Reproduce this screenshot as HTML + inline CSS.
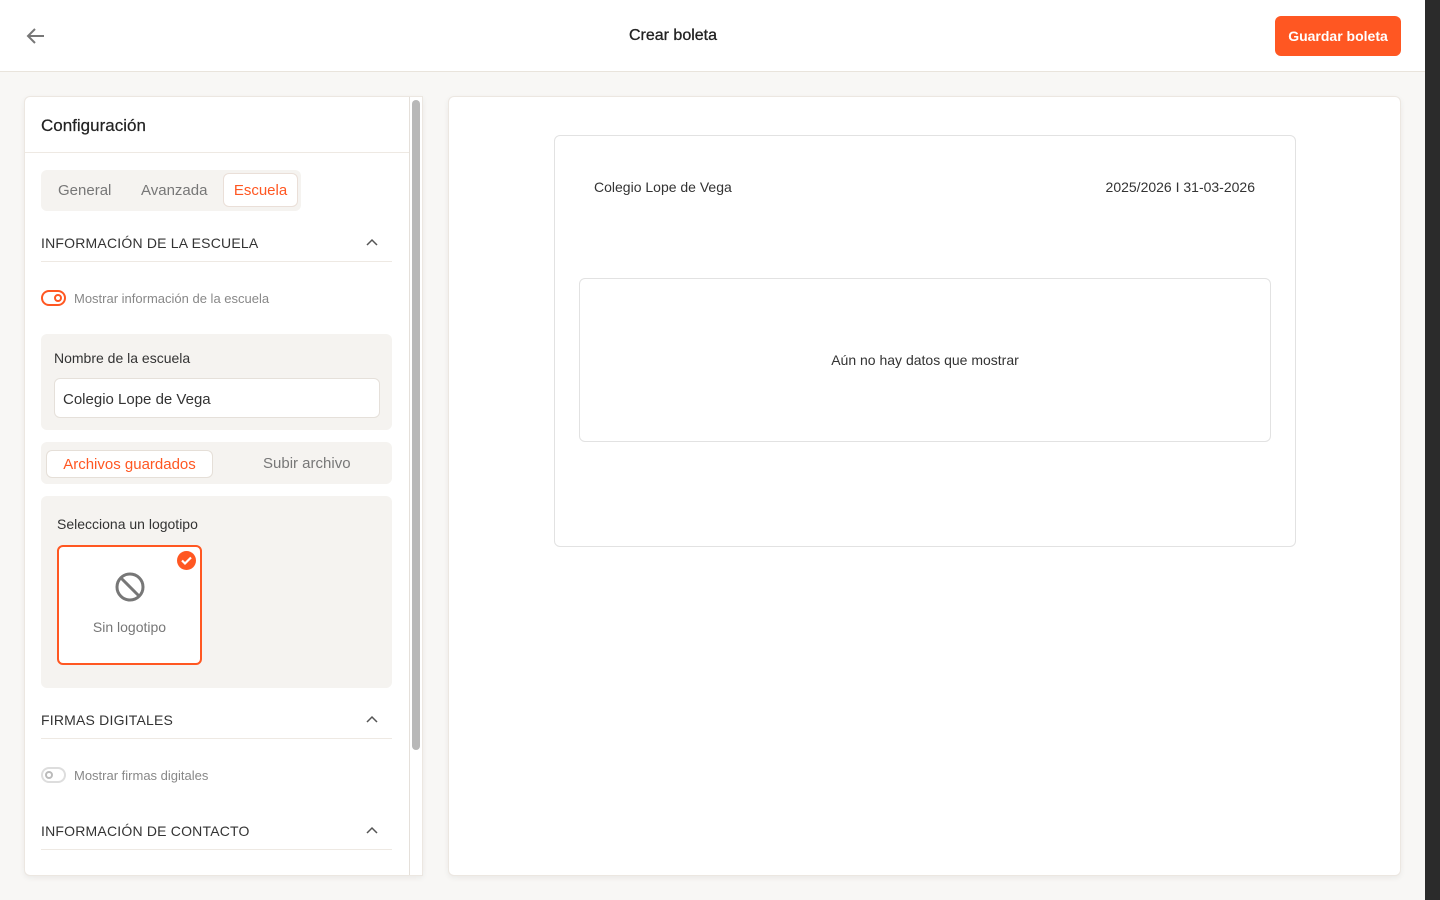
<!DOCTYPE html>
<html><head><meta charset="utf-8"><style>
*{box-sizing:border-box;margin:0;padding:0}
body{width:1440px;height:900px;overflow:hidden;background:#f8f7f5;font-family:"Liberation Sans",sans-serif;position:relative;color:#333}
.abs{position:absolute}
.top{left:0;top:0;width:1425px;height:72px;background:#fff;border-bottom:1px solid #e9e4dc}
.dark{left:1425px;top:0;width:15px;height:900px;background:#2b2b2b}
.btn{left:1275px;top:16px;width:126px;height:40px;background:#ff5722;border-radius:6px;color:#fff;font-weight:bold;font-size:14px;text-align:center;line-height:41px}
.card{background:#fff;border:1px solid #ece7e1;border-radius:6px;box-shadow:0 2px 6px rgba(0,0,0,.06)}
.sec{font-size:14px;color:#333;letter-spacing:.2px}
.hr{height:1px;background:#eee9e3}
.chev{width:12px;height:8px}
</style></head><body>
<div class="abs top"></div>
<svg class="abs" style="left:26px;top:27px" width="20" height="18" viewBox="0 0 20 18"><path d="M18 9H3M9 2L2 9l7 7" fill="none" stroke="#777" stroke-width="2"/></svg>
<div class="abs" style="left:0;width:1346px;top:27px;text-align:center;font-size:16px;color:#222;-webkit-text-stroke:.3px #222">Crear boleta</div>
<div class="abs btn">Guardar boleta</div>
<div class="abs dark"></div>

<div class="abs card" style="left:24px;top:96px;width:399px;height:780px;border-radius:6px 0 0 6px;overflow:hidden">
 <div class="abs" style="left:16px;top:19px;font-size:17px;color:#222;-webkit-text-stroke:.2px #222">Configuración</div>
 <div class="abs hr" style="left:0;top:55px;width:384px"></div>
 <div class="abs" style="left:384px;top:0;width:1px;height:780px;background:#e5e0da"></div>
 <div class="abs" style="left:387px;top:3px;width:8px;height:650px;background:#b8b8b8;border-radius:4px"></div>
 <div class="abs" style="left:16px;top:73px;width:260px;height:41px;background:#f5f3f0;border-radius:6px"></div>
 <div class="abs" style="left:33px;top:85px;font-size:15px;color:#777">General</div>
 <div class="abs" style="left:116px;top:85px;font-size:15px;color:#777">Avanzada</div>
 <div class="abs" style="left:198px;top:76px;width:75px;height:34px;background:#fff;border:1px solid #eadfd8;border-radius:6px;color:#ff5722;font-size:15px;text-align:center;line-height:34px">Escuela</div>
 <div class="abs sec" style="left:16px;top:138px">INFORMACIÓN DE LA ESCUELA</div>
 <svg class="abs chev" style="left:341px;top:141px" viewBox="0 0 12 8"><path d="M1 7l5-5 5 5" fill="none" stroke="#555" stroke-width="1.5"/></svg>
 <div class="abs hr" style="left:16px;top:164px;width:351px"></div>
 <div class="abs" style="left:16px;top:193px;width:25px;height:16px;border:2px solid #ff5722;border-radius:8px"><div class="abs" style="left:11px;top:2px;width:8px;height:8px;border:2px solid #ff5722;border-radius:50%"></div></div>
 <div class="abs" style="left:49px;top:194px;font-size:13px;color:#888">Mostrar información de la escuela</div>
 <div class="abs" style="left:16px;top:237px;width:351px;height:96px;background:#f5f3f0;border-radius:6px"></div>
 <div class="abs" style="left:29px;top:253px;font-size:14px;color:#333">Nombre de la escuela</div>
 <div class="abs" style="left:29px;top:281px;width:326px;height:40px;background:#fff;border:1px solid #e5e0da;border-radius:6px;font-size:15px;line-height:41px;padding-left:8px;color:#333">Colegio Lope de Vega</div>
 <div class="abs" style="left:16px;top:345px;width:351px;height:42px;background:#f5f3f0;border-radius:6px"></div>
 <div class="abs" style="left:21px;top:353px;width:167px;height:28px;background:#fff;border:1px solid #e5dfd8;border-radius:6px;color:#ff5722;font-size:15px;text-align:center;line-height:28px">Archivos guardados</div>
 <div class="abs" style="left:238px;top:358px;font-size:15px;color:#777">Subir archivo</div>
 <div class="abs" style="left:16px;top:399px;width:351px;height:192px;background:#f5f3f0;border-radius:6px"></div>
 <div class="abs" style="left:32px;top:419px;font-size:14px;color:#333">Selecciona un logotipo</div>
 <div class="abs" style="left:32px;top:448px;width:145px;height:120px;background:#fff;border:2px solid #ff5722;border-radius:6px"></div>
 <svg class="abs" style="left:89px;top:474px" width="32" height="32" viewBox="0 0 32 32"><circle cx="16" cy="16" r="13" fill="none" stroke="#777" stroke-width="3"/><path d="M7 7l18 18" stroke="#777" stroke-width="3"/></svg>
 <div class="abs" style="left:32px;top:522px;width:145px;text-align:center;font-size:14px;color:#777">Sin logotipo</div>
 <svg class="abs" style="left:152px;top:454px" width="19" height="19" viewBox="0 0 19 19"><circle cx="9.5" cy="9.5" r="9.5" fill="#ff5722"/><path d="M5 9.5l3 3 6-6" fill="none" stroke="#fff" stroke-width="2.2"/></svg>
 <div class="abs sec" style="left:16px;top:615px">FIRMAS DIGITALES</div>
 <svg class="abs chev" style="left:341px;top:618px" viewBox="0 0 12 8"><path d="M1 7l5-5 5 5" fill="none" stroke="#555" stroke-width="1.5"/></svg>
 <div class="abs hr" style="left:16px;top:641px;width:351px"></div>
 <div class="abs" style="left:16px;top:670px;width:25px;height:16px;border:2px solid #ddd;border-radius:8px"><div class="abs" style="left:2px;top:2px;width:8px;height:8px;border:2px solid #bbb;border-radius:50%"></div></div>
 <div class="abs" style="left:49px;top:671px;font-size:13px;color:#888">Mostrar firmas digitales</div>
 <div class="abs sec" style="left:16px;top:726px">INFORMACIÓN DE CONTACTO</div>
 <svg class="abs chev" style="left:341px;top:729px" viewBox="0 0 12 8"><path d="M1 7l5-5 5 5" fill="none" stroke="#555" stroke-width="1.5"/></svg>
 <div class="abs hr" style="left:16px;top:752px;width:351px"></div>
</div>

<div class="abs card" style="left:448px;top:96px;width:953px;height:780px">
 <div class="abs" style="left:105px;top:38px;width:742px;height:412px;border:1px solid #e2e2e2;border-radius:6px">
  <div class="abs" style="left:39px;top:43px;font-size:14px;color:#333">Colegio Lope de Vega</div>
  <div class="abs" style="right:40px;top:43px;font-size:14px;color:#333">2025/2026 I 31-03-2026</div>
  <div class="abs" style="left:24px;top:142px;width:692px;height:164px;border:1px solid #e2e2e2;border-radius:6px;text-align:center;line-height:162px;font-size:14px;color:#333">Aún no hay datos que mostrar</div>
 </div>
</div>
</body></html>
